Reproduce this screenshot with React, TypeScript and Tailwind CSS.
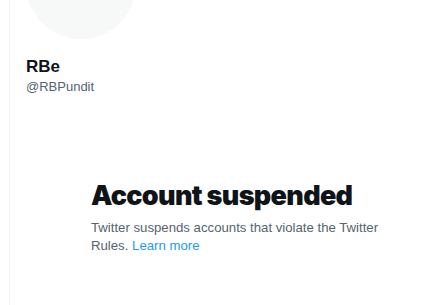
export default function App() {
  return (
    <div className="w-[430px] h-[305px] overflow-hidden bg-white" style={{ fontFamily: '"Liberation Sans", Arial, sans-serif' }}>
      <div className="ml-[9px] h-[305px] flex flex-col border-l border-[#eff3f4] pl-4">
        <div className="-mt-[71px] w-[110px] h-[110px] shrink-0 rounded-full bg-[#f7f9f9]" />
        <div className="mt-[17px] flex flex-col">
          <span className="text-[17px] leading-[22px] font-bold text-[#0f1419]">RBe</span>
          <span className="text-[13px] leading-[17px] text-[#536471]">@RBPundit</span>
        </div>
        <div className="mt-[85px] ml-[65px] flex flex-col">
          <h1 className="text-[27px] leading-[32px] font-black text-[#0f1419] tracking-tight" style={{ fontFamily: 'Inter, "Liberation Sans", sans-serif' }}>
            Account suspended
          </h1>
          <p className="mt-[7px] text-[13.2px] leading-[18px] text-[#536471] w-[320px]">
            Twitter suspends accounts that violate the Twitter Rules.{" "}
            <a className="text-[#1d9bf0]">Learn more</a>
          </p>
        </div>
      </div>
    </div>
  );
}
